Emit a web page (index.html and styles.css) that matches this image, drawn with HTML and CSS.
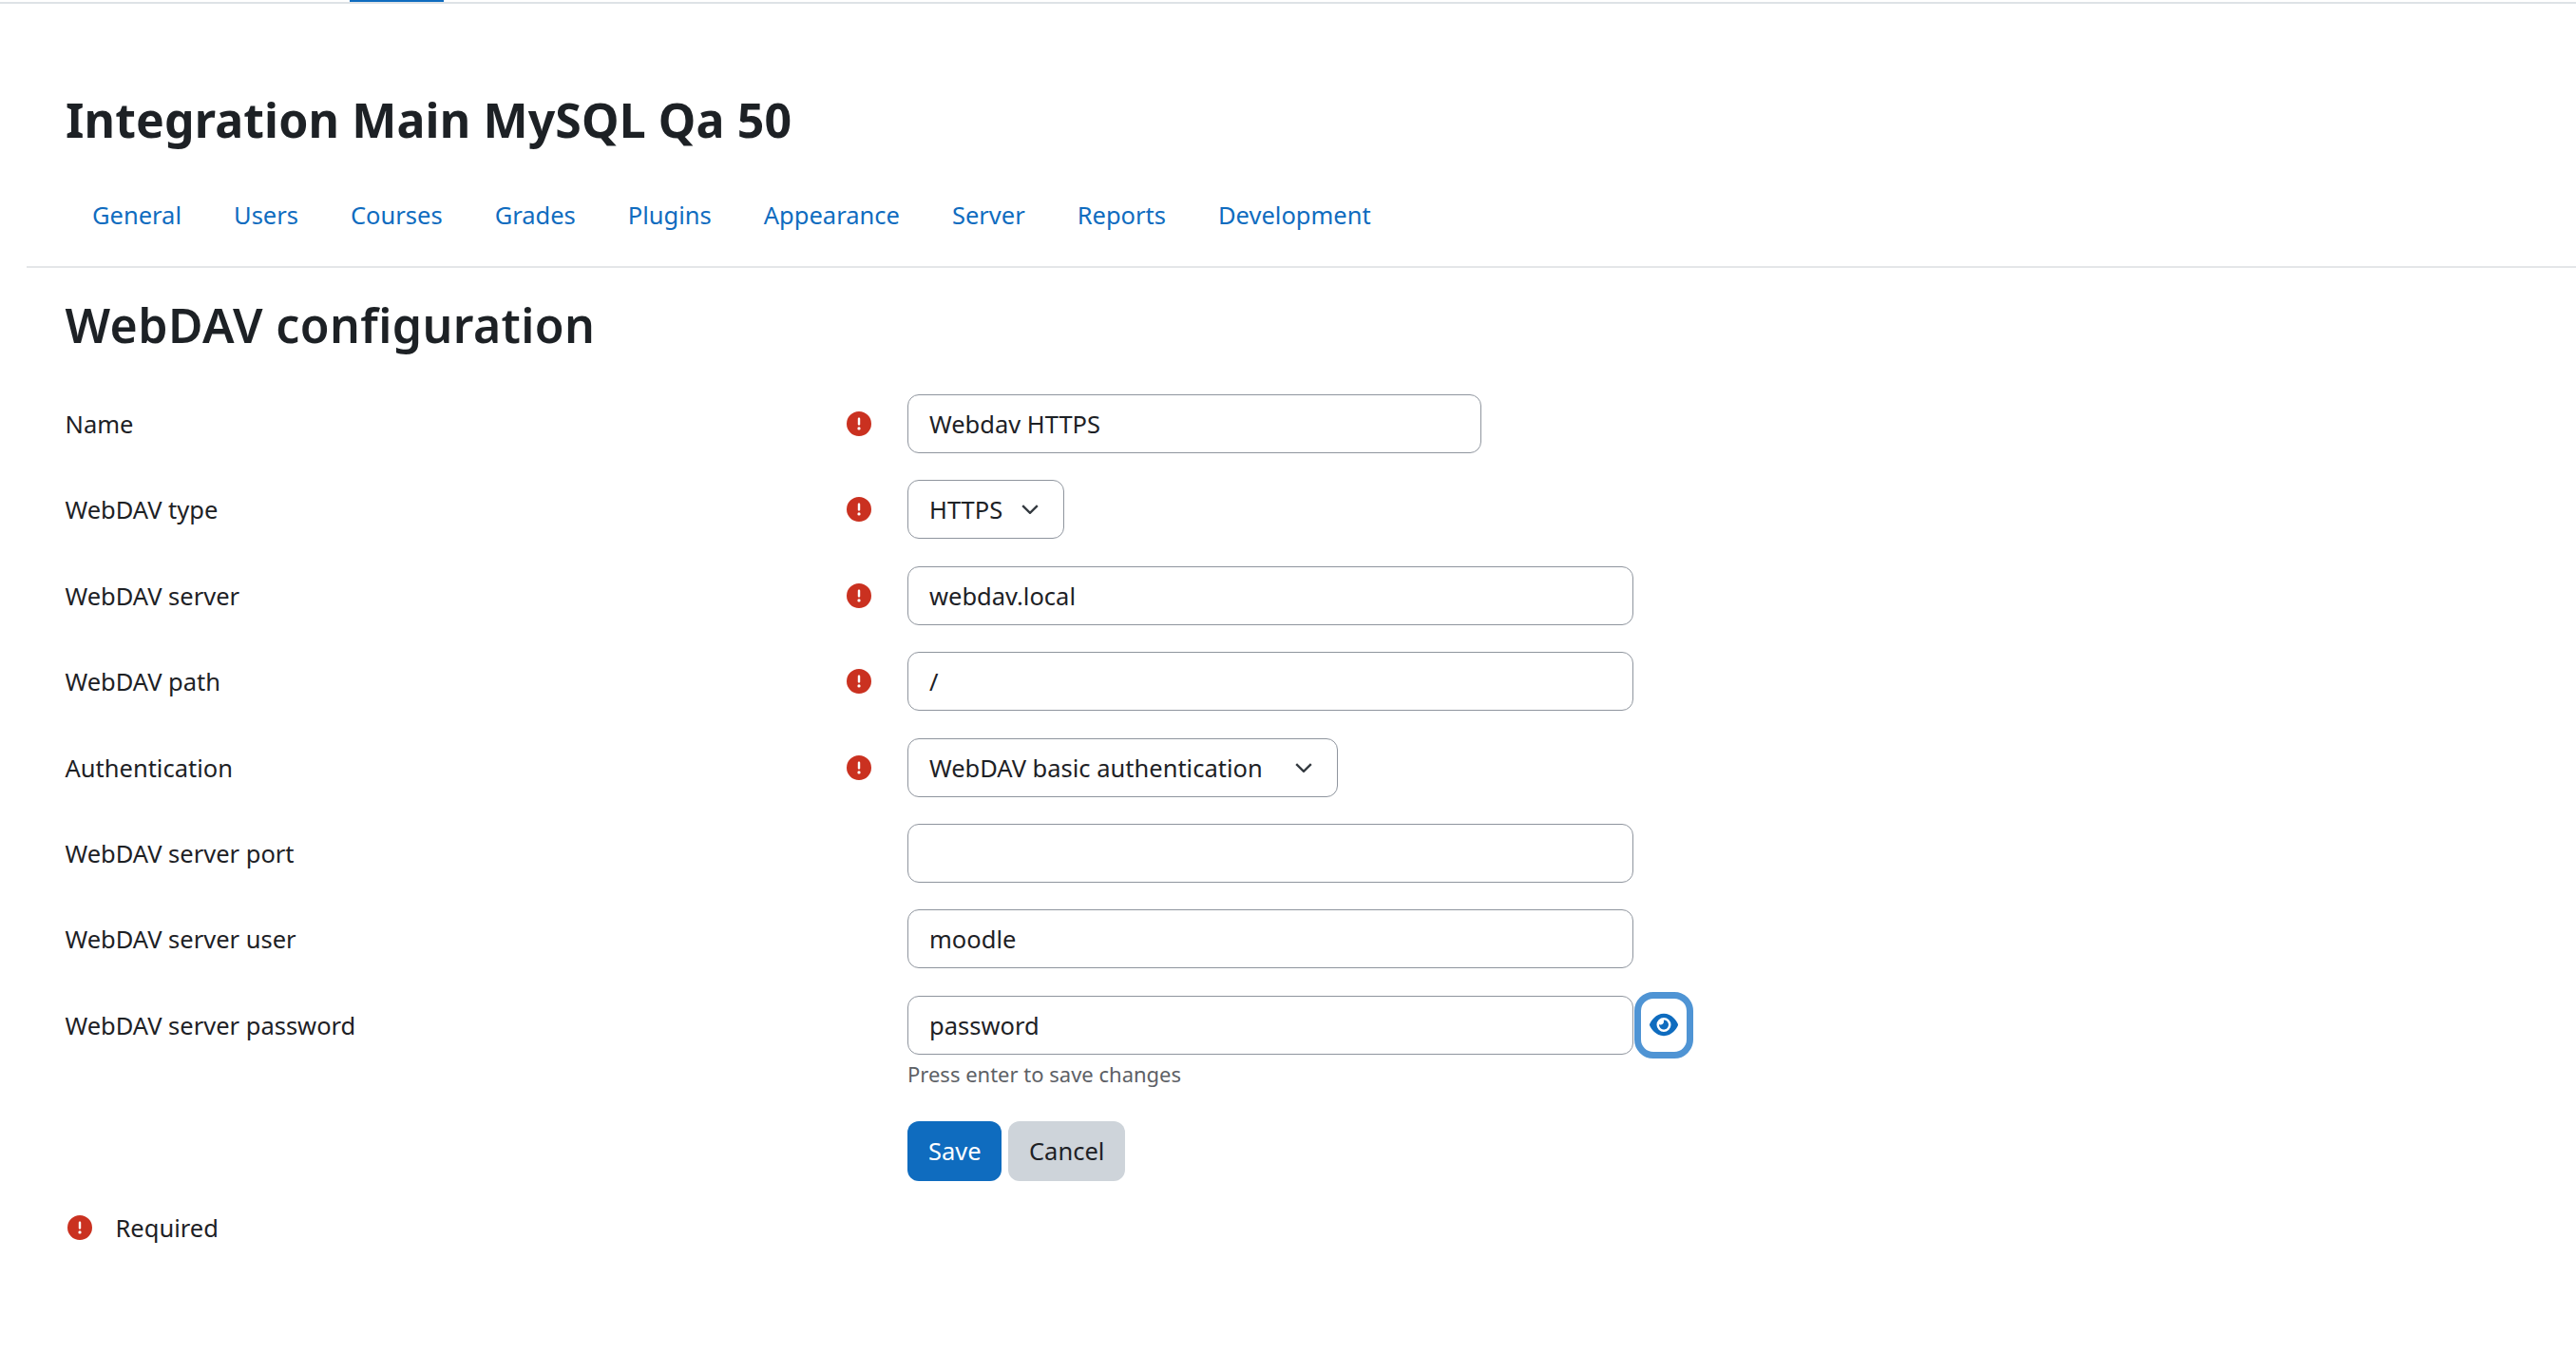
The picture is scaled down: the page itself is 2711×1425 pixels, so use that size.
FILE: index.html
```html
<!DOCTYPE html>
<html lang="en">
<head>
<meta charset="utf-8">
<title>WebDAV configuration</title>
<link rel="stylesheet" href="styles.css">
</head>
<body>
<svg class="sprite" width="0" height="0" aria-hidden="true">
  <symbol id="req" viewBox="0 0 512 512"><path d="M256 512A256 256 0 1 0 256 0a256 256 0 1 0 0 512zm0-384c13.3 0 24 10.7 24 24V264c0 13.3-10.7 24-24 24s-24-10.7-24-24V152c0-13.3 10.7-24 24-24zM224 352a32 32 0 1 1 64 0 32 32 0 1 1 -64 0z"/></symbol>
  <symbol id="chev" viewBox="0 0 18 10"><path d="M1.2 1.2 9 8.8l7.8-7.6" fill="none" stroke="currentColor" stroke-width="2.4"/></symbol>
</svg>
<div class="topbar"><span class="active-tab"></span></div>
<header class="page-header">
  <h1 class="site-title">Integration Main MySQL Qa 50</h1>
  <nav class="tabs">
    <a href="#">General</a><a href="#">Users</a><a href="#">Courses</a><a href="#">Grades</a><a href="#">Plugins</a><a href="#">Appearance</a><a href="#">Server</a><a href="#">Reports</a><a href="#">Development</a>
  </nav>
</header>
<main class="content">
  <h2 class="page-title">WebDAV configuration</h2>
  <form class="form">
    <div class="row"><label>Name</label><svg class="req"><use href="#req"/></svg><input class="field narrow" value="Webdav HTTPS"></div>
    <div class="row"><label>WebDAV type</label><svg class="req"><use href="#req"/></svg><div class="select sel-type"><span>HTTPS</span><svg class="chev"><use href="#chev"/></svg></div></div>
    <div class="row"><label>WebDAV server</label><svg class="req"><use href="#req"/></svg><input class="field" value="webdav.local"></div>
    <div class="row"><label>WebDAV path</label><svg class="req"><use href="#req"/></svg><input class="field" value="/"></div>
    <div class="row"><label>Authentication</label><svg class="req"><use href="#req"/></svg><div class="select sel-auth"><span>WebDAV basic authentication</span><svg class="chev"><use href="#chev"/></svg></div></div>
    <div class="row"><label>WebDAV server port</label><span class="no-req"></span><input class="field" value=""></div>
    <div class="row"><label>WebDAV server user</label><span class="no-req"></span><input class="field" value="moodle"></div>
    <div class="row pw-row"><label>WebDAV server password</label><span class="no-req"></span>
      <div class="pw">
        <input class="field" value="password">
        <button type="button" class="eye"><svg viewBox="0 0 576 512"><path d="M288 32c-80.800 0-145.500 36.800-192.600 80.600C48.600 156 17.300 208 2.500 243.700c-3.300 7.900-3.300 16.700 0 24.600C17.300 304 48.600 356 95.400 399.400C142.500 443.200 207.200 480 288 480s145.500-36.800 192.600-80.600c46.800-43.500 78.100-95.400 93-131.100c3.300-7.900 3.300-16.700 0-24.600c-14.900-35.700-46.200-87.700-93-131.100C433.500 68.800 368.800 32 288 32zM144 256a144 144 0 1 1 288 0 144 144 0 1 1 -288 0zm144-64c0 35.300-28.700 64-64 64c-7.100 0-13.900-1.200-20.300-3.300c-5.500-1.800-11.900 1.600-11.700 7.400c.3 6.900 1.300 13.800 3.200 20.700c13.700 51.200 66.400 81.600 117.600 67.900s81.600-66.400 67.900-117.600c-11.100-41.500-47.800-69.400-88.600-71.100c-5.800-.2-9.200 6.100-7.400 11.700c2.100 6.400 3.300 13.200 3.300 20.300z"/></svg></button>
      </div>
    </div>
    <p class="hint">Press enter to save changes</p>
    <div class="actions"><button type="button" class="btn save">Save</button><button type="button" class="btn cancel">Cancel</button></div>
  </form>
  <div class="required"><svg class="req"><use href="#req"/></svg><span>Required</span></div>
</main>
</body>
</html>
```
FILE: styles.css
```css
* { box-sizing: border-box; }
html, body { margin: 0; padding: 0; background: #fff; }
body { font-family: "Noto Sans", "Open Sans", sans-serif; font-size: 25.500px; color: #1d2125; height: 1425px; overflow: hidden; }
.sprite { position: absolute; }
.topbar { height: 4px; border-bottom: 2px solid #dee2e6; padding-left: 368px; }
.active-tab { display: block; width: 99px; height: 2px; background: #0f6cbf; }
.page-header { margin-left: 28px; height: 278px; border-bottom: 2px solid #e4e6e8; padding: 92px 0 0 41px; }
.site-title { margin: 0; font-size: 50px; line-height: 60px; font-weight: 700; letter-spacing: 0.120px; }
.tabs { display: flex; margin-top: 53px; gap: 55px; padding-left: 28px; }
.tabs a { color: #0f6cbf; text-decoration: none; line-height: 34px; }
.content { padding: 0 0 0 68.500px; }
.page-title { margin: 0; padding-top: 30px; font-size: 50px; line-height: 60px; font-weight: 600; letter-spacing: 0.400px; height: 133px; }
.form { display: flex; flex-direction: column; }
.row { display: flex; align-items: center; height: 62px; margin-bottom: 28.400px; }
.row label { width: 822.500px; }
.req { width: 26px; height: 26px; fill: #ca3120; flex: none; }
.no-req { width: 26px; flex: none; }
.row > .req, .row > .no-req { margin-right: 38px; }
.field { font: inherit; color: inherit; height: 62px; width: 764px; border: 1.500px solid #8f959e; border-radius: 12px; padding: 0 22px; background: #fff; outline: none; }
.field.narrow { width: 604px; }
.select { height: 62px; border: 1.500px solid #8f959e; border-radius: 12px; padding: 0 26px 0 22px; display: flex; align-items: center; justify-content: space-between; }
.sel-type { width: 165px; }
.sel-auth { width: 453px; }
.chev { width: 18px; height: 10px; color: #343a40; flex: none; }
.pw { display: flex; align-items: center; height: 62px; }
.pw-row { margin-bottom: 0; }
.eye { width: 62px; height: 70px; margin-left: 1px; border: 7px solid #4f94d4; border-radius: 20px; background: #fff; padding: 0; display: flex; align-items: center; justify-content: center; flex: none; }
.eye svg { width: 30px; height: 27px; fill: #0f6cbf; }
.hint { margin: 4px 0 0 886.500px; font-size: 22px; line-height: 33px; color: #5d6166; }
.actions { display: flex; gap: 7px; margin: 33px 0 0 886.500px; }
.btn { font: inherit; height: 63px; border: 0; border-radius: 12px; padding: 0 22px; }
.save { background: #0f6cbf; color: #fff; width: 99px; }
.cancel { background: #ced4da; color: #1d2125; width: 123px; }
.required { display: flex; align-items: center; gap: 25px; margin: 32px 0 0 2px; }
```
